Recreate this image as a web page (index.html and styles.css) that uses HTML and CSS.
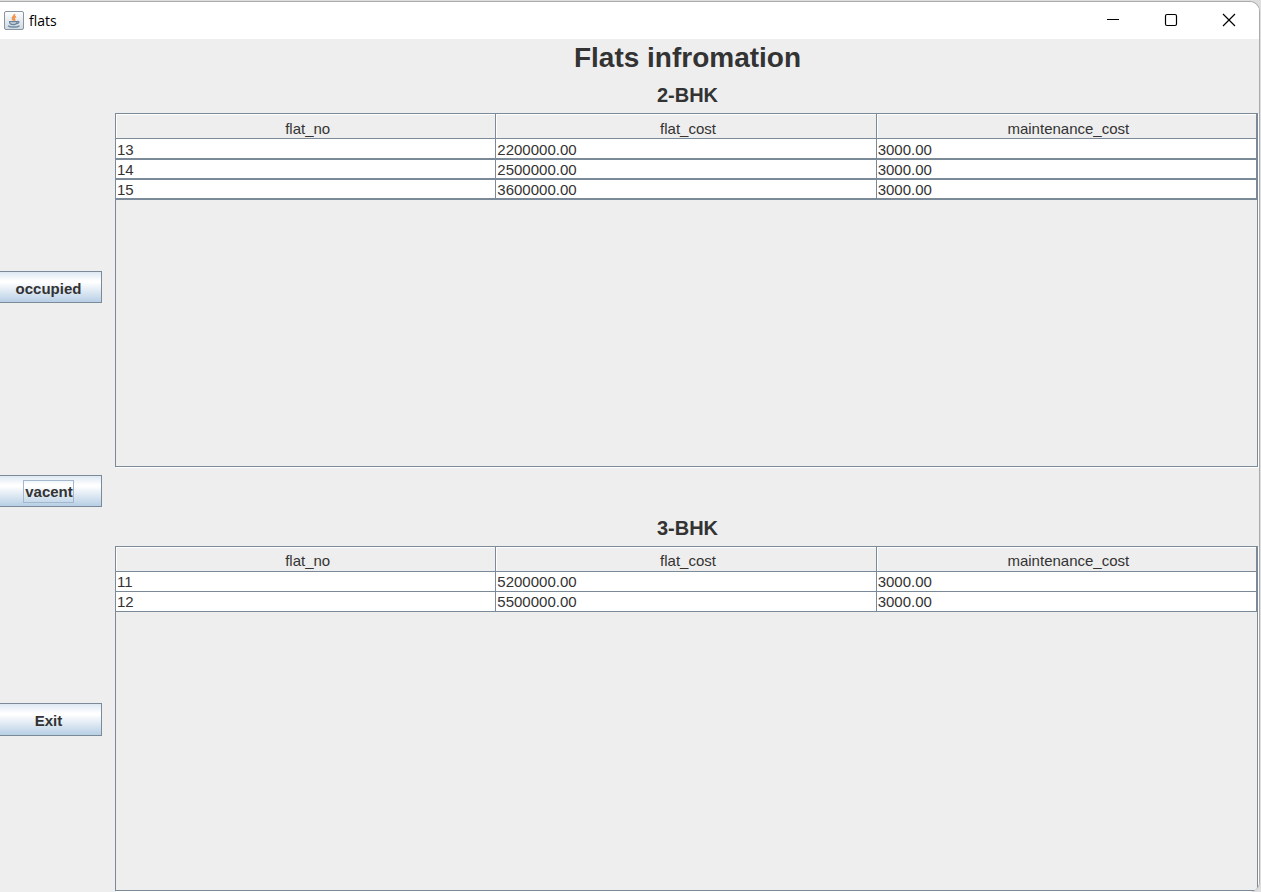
FILE: index.html
```html
<!DOCTYPE html>
<html lang="en">
<head>
<meta charset="utf-8">
<title>flats</title>
<link rel="stylesheet" href="styles.css">
</head>
<body>
<div class="window">
  <header class="titlebar">
    <svg class="app-icon" width="20" height="20" viewBox="0 0 20 20" aria-hidden="true">
      <defs><linearGradient id="tile" x1="0" y1="0" x2="0" y2="1"><stop offset="0" stop-color="#fff"/><stop offset="1" stop-color="#cfd8e0"/></linearGradient></defs>
      <rect x=".5" y=".5" width="19" height="18" rx="1.500" fill="url(#tile)" stroke="#8794a1"/>
      <path d="M10.500 3c.8 2-3.300 2.800-2 5 .4.800 1 1 1 1.800M12 5.500c-1.900.9-2.500 1.800-1.400 2.900.5.600.2 1-.2 1.400" fill="none" stroke="#f0934a" stroke-width="1.600"/>
      <path d="M5.500 10.500h7.500c0 2.500-1 3.200-3.600 3.200s-3.900-.7-3.900-3.200zM13 10.500c3-.6 2.500 2-.8 2.300M4 14.800c2 1.800 9.500 1.800 11.500 0" fill="#b5c4d0" stroke="#6885a0" stroke-width="1.200"/>
    </svg>
    <span class="caption">flats</span>
    <div class="controls">
      <button class="control" aria-label="Minimize"><svg width="14" height="14" viewBox="0 0 14 14"><path d="M1 6.500h12" stroke="#000"/></svg></button>
      <button class="control" aria-label="Maximize"><svg width="14" height="14" viewBox="0 0 14 14"><rect x="1.500" y="1.500" width="11" height="11" rx="1.500" fill="none" stroke="#000" stroke-width="1.200"/></svg></button>
      <button class="control" aria-label="Close"><svg width="14" height="14" viewBox="0 0 14 14"><path d="M1 1l12 12M13 1L1 13" stroke="#000" stroke-width="1.200"/></svg></button>
    </div>
  </header>
  <div class="content">
    <nav class="sidebar">
      <button class="action occupied">occupied</button>
      <button class="action vacant"><span class="focus">vacent</span></button>
      <button class="action exit">Exit</button>
    </nav>
    <main class="main">
      <h1 class="heading">Flats infromation</h1>
      <h2 class="subheading">2-BHK</h2>
      <section class="pane">
        <table class="grid heavy">
          <thead><tr><th>flat_no</th><th>flat_cost</th><th>maintenance_cost</th></tr></thead>
          <tbody>
            <tr><td>13</td><td>2200000.00</td><td>3000.00</td></tr>
            <tr><td>14</td><td>2500000.00</td><td>3000.00</td></tr>
            <tr><td>15</td><td>3600000.00</td><td>3000.00</td></tr>
          </tbody>
        </table>
      </section>
      <h2 class="subheading second">3-BHK</h2>
      <section class="pane">
        <table class="grid">
          <thead><tr><th>flat_no</th><th>flat_cost</th><th>maintenance_cost</th></tr></thead>
          <tbody>
            <tr><td>11</td><td>5200000.00</td><td>3000.00</td></tr>
            <tr><td>12</td><td>5500000.00</td><td>3000.00</td></tr>
          </tbody>
        </table>
      </section>
    </main>
  </div>
</div>
</body>
</html>
```
FILE: styles.css
```css
* { box-sizing: border-box; }
body {
  margin: 0;
  height: 100vh;
  padding: 1px 1px 0 0;
  background: #dedede;
  color: #333;
  font-family: "Liberation Sans", Arial, sans-serif;
  font-size: 15px;
}
.window {
  height: 100%;
  display: flex;
  flex-direction: column;
  overflow: hidden;
  background: #eee;
  border-top: 1px solid #aaa;
  border-right: 1px solid #aaa;
  border-radius: 0 10px 10px 0;
}
.titlebar {
  height: 37px;
  display: flex;
  align-items: center;
  padding-left: 4px;
  background: #fff;
}
.caption {
  margin-left: 5px;
  color: #000;
  font-family: "Open Sans", "Noto Sans", sans-serif;
  font-size: 14px;
}
.controls { display: flex; margin-left: auto; padding-right: 1px; }
.control {
  width: 58px;
  height: 37px;
  padding: 0 0 2px;
  border: 0;
  background: none;
  display: flex;
  align-items: center;
  justify-content: center;
}
.content { flex: 1; min-height: 0; display: flex; gap: 13px; }
.sidebar { width: 102px; flex: none; }
.action {
  display: block;
  width: 100%;
  height: 32px;
  padding: 2px 4px 0 0;
  border: 1px solid #7a8a99;
  border-left: 0;
  background: linear-gradient(#dde8f3 0%, #fff 30%, #fff 34%, #b8cfe5 100%);
  color: #333;
  font: bold 15px "Liberation Sans", Arial, sans-serif;
}
.occupied { margin-top: 232px; }
.vacant { margin-top: 172px; padding-top: 0; }
.exit { margin-top: 196px; height: 33px; }
.focus { padding: 2px 0 2px 1px; outline: 1px solid #a3b8cc; }
.main {
  flex: 1;
  min-width: 0;
  display: flex;
  flex-direction: column;
  padding: 0 1px 1px 0;
}
.heading, .subheading { margin: 0; padding-left: 2px; text-align: center; }
.heading { font-size: 28px; line-height: 37px; }
.subheading { padding-top: 2px; font-size: 20px; line-height: 35px; }
.second { margin-top: 42px; }
.pane {
  flex: 1 1 346px;
  border: 1px solid #7a8a99;
  box-shadow: 1px 1px #fff;
}
.pane:first-of-type { flex-basis: 354px; }
.grid {
  width: 100%;
  table-layout: fixed;
  border-collapse: separate;
  border-spacing: 0;
}
.grid th, .grid td {
  border-right: 1px solid #7a8a99;
  border-bottom: 1px solid #7a8a99;
}
.grid th {
  height: 25px;
  padding: 4px 0 0 4px;
  box-shadow: inset 1px 1px #fff;
  font-weight: normal;
  line-height: 20px;
}
.grid td {
  height: 20px;
  padding: 1px 0 1px 1px;
  background: #fff;
  line-height: 17px;
}
.grid.heavy th { padding-top: 6px; line-height: 18px; }
.grid.heavy td { padding: 2px 0 0 1px; border-bottom-width: 2px; line-height: 16px; }
.grid.heavy tbody tr:first-child td { height: 21px; padding-top: 3px; }
```
